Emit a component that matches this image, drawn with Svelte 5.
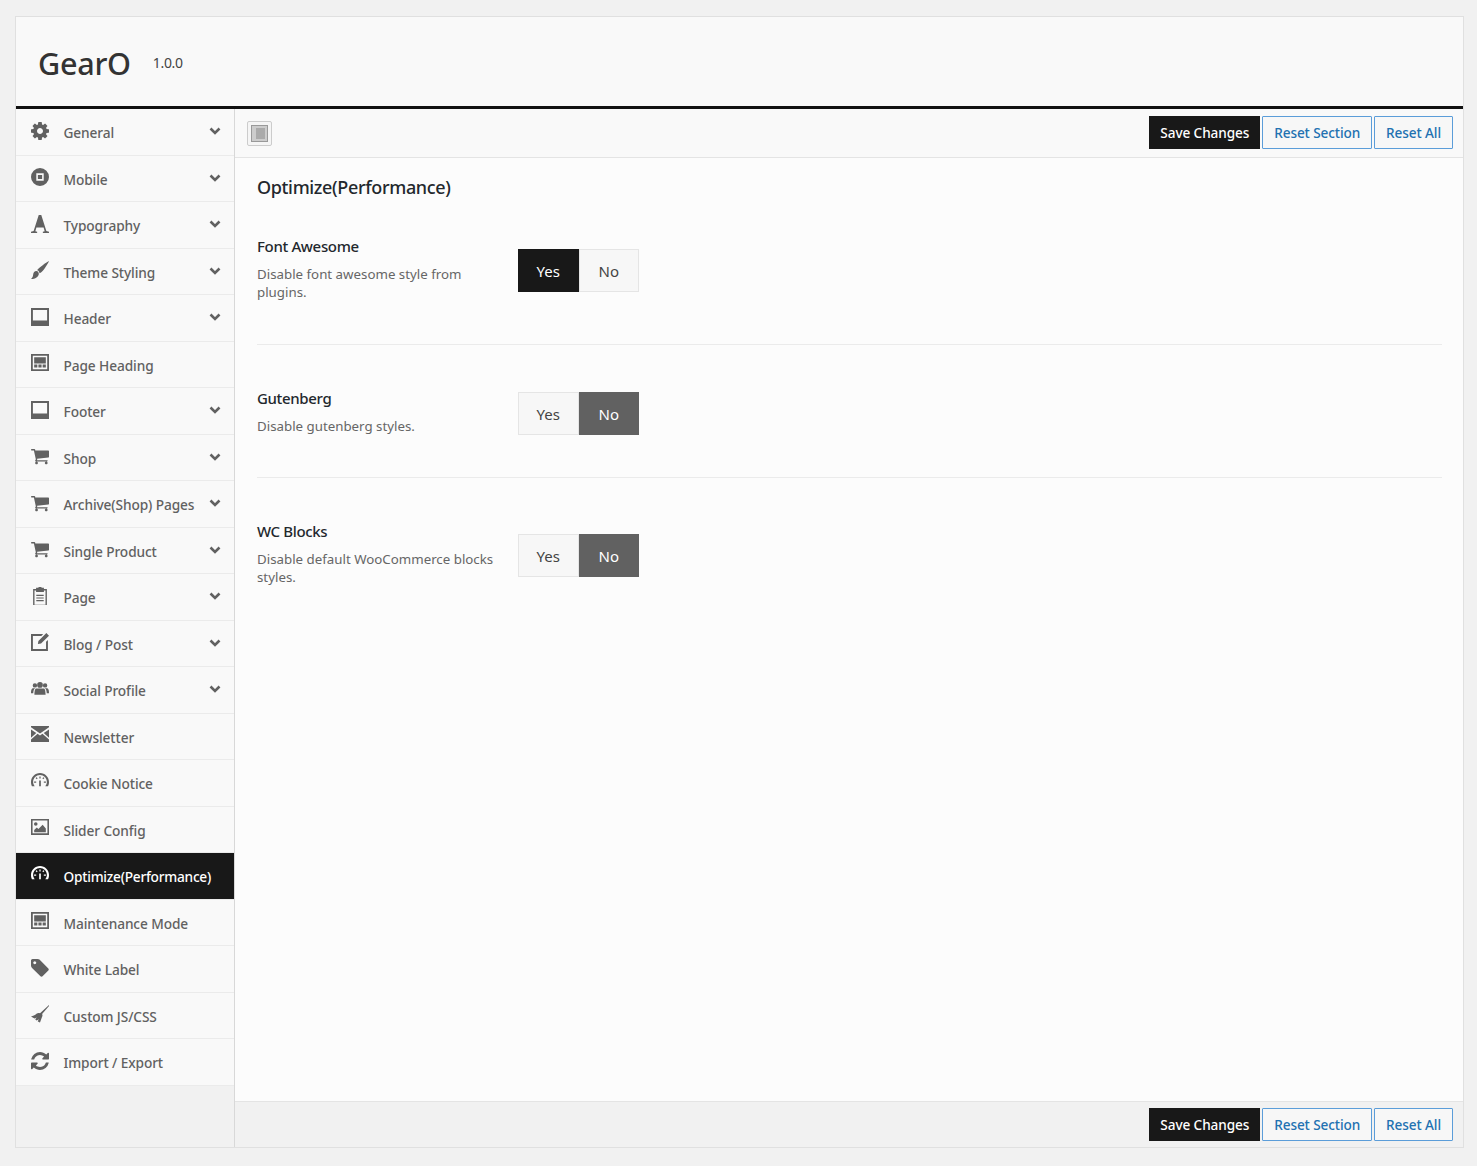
<script>
  const fa = '128 128 1536 1536';
  const box = '0 0 17 17';
  const header = 'M0 0h17v17H0zM1.800 1.800v10.100h13.400V1.800z';
  const layout = 'M0 0h17v16H0zM1.700 1.700v12.600h13.600V1.700zM3 3h11v6H3zM3 10h3v2.700H3zM7 10h3v2.700H7zM11 10h3v2.700h-3z';
  const cart = 'M704 1536q0 52-38 90t-90 38-90-38-38-90 38-90 90-38 90 38 38 90zm896 0q0 52-38 90t-90 38-90-38-38-90 38-90 90-38 90 38 38 90zm128-1088v512q0 24-16.500 42.500t-40.500 21.500l-1044 122q13 60 13 70 0 16-24 64h920q26 0 45 19t19 45-19 45-45 19h-1024q-26 0-45-19t-19-45q0-11 8-31.500t16-36 21.500-40 15.500-29.500l-177-823h-204q-26 0-45-19t-19-45 19-45 45-19h256q16 0 28.500 6.500t19.500 15.500 13 24.500 8 26 5.500 29.500 4.500 26h1201q26 0 45 19t19 45z';
  const gauge = 'M8.500 0C13.200 0 17 3.800 17 8.500c0 1.700-.3 2.700-.9 4h-2.600c.8-1.200 1.500-2.400 1.500-4C15 4.900 12.100 2 8.500 2S2 4.900 2 8.500c0 1.600.7 2.800 1.500 4H.9C.3 11.200 0 10.200 0 8.500 0 3.800 3.800 0 8.500 0zM7.700 7h1.600v5.500H7.700zM7.900 3.200h1.200v2H7.900zM4.300 4.800l.9-.9 1.100 1.100-.9.900zM12.700 4.800l-1.100 1.100-.9-.9 1.100-1.100zM2.900 8h2v1.200h-2zM12.100 8h2v1.200h-2z';

  const icons = {
    gear: { box: fa, d: 'M1152 896q0-106-75-181t-181-75-181 75-75 181 75 181 181 75 181-75 75-181zm512-109v222q0 12-8 23t-20 13l-185 28q-19 54-39 91 35 50 107 138 10 12 10 25t-9 23q-27 37-99 108t-94 71q-12 0-26-9l-138-108q-44 23-91 38-16 136-29 186-7 28-36 28h-222q-14 0-24.500-8.500t-11.500-21.500l-28-184q-49-16-90-37l-141 107q-10 9-25 9-14 0-25-11-126-114-165-168-7-10-7-23 0-12 8-23 15-21 51-66.500t54-70.500q-27-50-41-99l-183-27q-13-2-21-12.500t-8-23.500v-222q0-12 8-23t19-13l186-28q14-46 39-92-40-57-107-138-10-12-10-24 0-10 9-23 26-36 98.500-107.500t94.500-71.500q13 0 26 10l138 107q44-23 91-38 16-136 29-186 7-28 36-28h222q14 0 24.500 8.500t11.500 21.500l28 184q49 16 90 37l142-107q9-9 24-9 13 0 25 10 129 119 165 170 7 8 7 22 0 12-8 23-15 21-51 66.500t-54 70.500q26 50 41 98l183 28q13 2 21 12.500t8 23.500z' },
    mobile: { box, d: 'M8.500 0a8.500 8.500 0 1 1 0 17 8.500 8.500 0 0 1 0-17zM5 5v7h7V5zM6.500 6.500h4v4h-4z' },
    font: { box, d: 'M7.300 0h2.400l4.800 15.200 2.500.6V17h-5.800v-1.200l1.700-.5-1-3.500H5.100l-1 3.500 1.700.5V17H0v-1.200l2.500-.6z' },
    brush: { box, d: 'M17 0c-1 2.500-4.500 8-7 10.500-.6.600-1.300 1-2 1.100C7.800 9.800 7.200 9 5.700 8.700 8 6 14 1.500 17 0zM5 9.500c1.500.2 2.300 1.100 2.400 2.500C7.400 14.800 4 17 0 17c1.500-1 1.800-2.500 2-4 .2-2 1.300-3.400 3-3.500z' },
    header: { box, d: header },
    layout: { box, d: layout },
    cart: { box: '64 128 1664 1536', d: cart },
    clip: { box, d: 'M2 2h2.800V.8h2.300V0h2.800v.8h2.300V2H15v16H2zM3.300 3.300v13.400h10.400V3.300h-1.500v1.500H4.800V3.300zM5 7.300h7v1.100H5zM5 9.800h7v1.100H5zM5 12.300h7v1.100H5z' },
    edit: { box, d: 'M0 1h11.500L9.800 2.800h-8v12.400h12.400V8.300L16 6.500V17H0zM14.500 0 17 2.500 9.500 10l-3 .5.500-3z' },
    people: { box, d: 'M8.500 2a2.700 2.700 0 1 1 0 5.400 2.700 2.700 0 0 1 0-5.400zM3.700 3a2.100 2.100 0 1 1 0 4.200 2.100 2.100 0 0 1 0-4.200zM13.300 3a2.100 2.100 0 1 1 0 4.200 2.100 2.100 0 0 1 0-4.200zM5 8h7c1 0 1.600 1.200 1.800 6H3.200C3.400 9.200 4 8 5 8zM1.500 7.800H4c-1.300 1-1.700 2-1.900 4.700H0c0-2.500.3-4.200 1.500-4.700zM13 7.800h2.500c1.200.5 1.500 2.200 1.500 4.700h-2.100c-.2-2.700-.6-3.700-1.900-4.700z' },
    mail: { box, d: 'M0 0h17v1.200L8.500 7 0 1.200zM0 3.200l5 3.300L0 11zM17 3.200v7.800l-5-4.500zM6.200 7.400 8.500 9l2.300-1.600 6.200 5.300V15H0v-2.300z' },
    gauge: { box, d: gauge },
    image: { box, d: 'M0 0h17v15H0zM1.500 1.500v12h14v-12zM4.500 3a1.700 1.700 0 1 1 0 3.400 1.700 1.700 0 0 1 0-3.400zM3 12.500v-2l2.500-2.500 1.500 1.500L11 5.500l3 3.500v3.500z' },
    tag: { box: fa, d: 'M576 448q0-53-37.500-90.500t-90.500-37.500-90.500 37.500-37.500 90.500 37.500 90.500 90.500 37.500 90.500-37.500 37.500-90.500zm1067 576q0 53-37 90l-491 492q-39 37-91 37-53 0-90-37l-715-716q-38-37-64.500-101t-26.500-117v-416q0-52 38-90t90-38h416q53 0 117 26.500t102 64.500l715 714q37 39 37 91z' },
    broom: { box, d: 'M17 0v1l-6.500 7.500c.5 1 .5 2-.2 3L8.500 16.500c-.8-.2-1.500-.6-2.200-1.100l1.200-2-2.200 1.200c-.5-.4-.9-.8-1.300-1.200l1.500-1.500-2.200.8L0 10.800c2-.3 3.500-1.200 5.500-2.800 1-.7 2.200-.7 3-.1z' },
    refresh: { box: fa, d: 'M1639 1056q0 5-1 7-64 268-268 434.500t-478 166.500q-146 0-282.500-55t-243.500-157l-129 129q-19 19-45 19t-45-19-19-45v-448q0-26 19-45t45-19h448q26 0 45 19t19 45-19 45l-137 137q71 66 161 102t187 36q134 0 250-65t186-179q11-17 53-117 8-23 30-23h192q13 0 22.500 9.500t9.500 22.500zm25-800v448q0 26-19 45t-45 19h-448q-26 0-45-19t-19-45 19-45l138-138q-148-137-349-137-134 0-250 65t-186 179q-11 17-53 117-8 23-30 23h-199q-13 0-22.500-9.500t-9.500-22.500v-7q65-268 270-434.500t480-166.500q146 0 284 55.500t245 156.500l130-129q19-19 45-19t45 19 19 45z' },
  };

  const menu = [
    { label: 'General', icon: 'gear', sub: true },
    { label: 'Mobile', icon: 'mobile', sub: true },
    { label: 'Typography', icon: 'font', sub: true },
    { label: 'Theme Styling', icon: 'brush', sub: true },
    { label: 'Header', icon: 'header', sub: true },
    { label: 'Page Heading', icon: 'layout' },
    { label: 'Footer', icon: 'header', sub: true },
    { label: 'Shop', icon: 'cart', sub: true },
    { label: 'Archive(Shop) Pages', icon: 'cart', sub: true },
    { label: 'Single Product', icon: 'cart', sub: true },
    { label: 'Page', icon: 'clip', sub: true },
    { label: 'Blog / Post', icon: 'edit', sub: true },
    { label: 'Social Profile', icon: 'people', sub: true },
    { label: 'Newsletter', icon: 'mail' },
    { label: 'Cookie Notice', icon: 'gauge' },
    { label: 'Slider Config', icon: 'image' },
    { label: 'Optimize(Performance)', icon: 'gauge', active: true },
    { label: 'Maintenance Mode', icon: 'layout' },
    { label: 'White Label', icon: 'tag' },
    { label: 'Custom JS/CSS', icon: 'broom' },
    { label: 'Import / Export', icon: 'refresh' },
  ];

  const fields = [
    { title: 'Font Awesome', desc: 'Disable font awesome style from plugins.', on: true },
    { title: 'Gutenberg', desc: 'Disable gutenberg styles.', on: false },
    { title: 'WC Blocks', desc: 'Disable default WooCommerce blocks styles.', on: false },
  ];
</script>

{#snippet actions()}
  <div class="actions">
    <button class="save">Save Changes</button>
    <button class="reset">Reset Section</button>
    <button class="reset">Reset All</button>
  </div>
{/snippet}

<div class="panel">
  <header class="top">
    <h1>GearO</h1>
    <span class="version">1.0.0</span>
  </header>

  <div class="body">
    <nav class="side">
      {#each menu as item}
        <a class="item" class:active={item.active} href="#top">
          <svg class="icon" viewBox={icons[item.icon].box} aria-hidden="true"><path d={icons[item.icon].d} fill-rule="evenodd" /></svg>
          <span class="label">{item.label}</span>
          {#if item.sub}
            <svg class="chev" viewBox="0 0 12 8" aria-hidden="true"><path d="M1.500 1.500 6 6l4.500-4.500" /></svg>
          {/if}
        </a>
      {/each}
    </nav>

    <main class="main">
      <div class="toolbar">
        <button class="expand" aria-label="Expand">
          <span class="expand-box"></span>
        </button>
        {@render actions()}
      </div>

      <div class="content">
        <h2>Optimize(Performance)</h2>
        {#each fields as field}
          <section class="field">
            <div class="info">
              <h3>{field.title}</h3>
              <p>{field.desc}</p>
            </div>
            <div class="switch">
              <span class="opt" class:yes={field.on}>Yes</span>
              <span class="opt" class:no={!field.on}>No</span>
            </div>
          </section>
        {/each}
      </div>

      <div class="foot">
        {@render actions()}
      </div>
    </main>
  </div>
</div>

<style>
  :global(body) {
    background: #f1f1f1;
    font-family: "Noto Sans", "Open Sans", sans-serif;
    color: #23282d;
  }

  .panel {
    box-sizing: border-box;
    margin: 16px 12px 0 15px;
    width: 1449px;
    height: 1132px;
    border: 1px solid #e0e0e0;
    background: #f9f9f9;
    display: flex;
    flex-direction: column;
  }

  .top {
    box-sizing: border-box;
    height: 92px;
    border-bottom: 3px solid #111;
    padding: 3px 0 0 22px;
    display: flex;
    align-items: center;
    gap: 22px;
  }

  h1 {
    margin: 0;
    font-size: 30.600px;
    font-weight: 500;
    color: #333;
    letter-spacing: -0.3px;
  }

  .version {
    font-size: 14px;
    color: #444;
    letter-spacing: -0.3px;
    margin-bottom: 2px;
  }

  .body {
    flex: 1;
    display: flex;
    min-height: 0;
  }

  .side {
    box-sizing: border-box;
    width: 219px;
    flex: none;
    background: #f1f1f1;
    border-right: 1px solid #d8d8d8;
  }

  .item {
    box-sizing: border-box;
    height: 46.500px;
    display: flex;
    align-items: center;
    padding: 0 13px 0 15px;
    background: #f9f9f9;
    border-bottom: 1px solid #ebebeb;
    color: #616161;
    text-decoration: none;
    font-size: 13.700px;
    font-weight: 500;
  }

  .item.active {
    background: #181818;
    color: #fff;
  }

  .item.active .label {
    letter-spacing: -0.25px;
  }

  .icon {
    width: 18px;
    height: 18px;
    flex: none;
    fill: currentColor;
    margin-top: -2px;
  }

  .label {
    margin: 2px 0 0 14.500px;
    flex: 1;
    white-space: nowrap;
    letter-spacing: -0.1px;
  }

  .chev {
    width: 12px;
    height: 8px;
    flex: none;
    fill: none;
    stroke: #616161;
    stroke-width: 2.600;
    margin-top: -1px;
  }

  .main {
    flex: 1;
    min-width: 0;
    display: flex;
    flex-direction: column;
    background: #fcfcfc;
  }

  .toolbar {
    box-sizing: border-box;
    height: 49px;
    flex: none;
    display: flex;
    align-items: center;
    justify-content: space-between;
    padding: 0 10px 0 12px;
    background: #f9f9f9;
    border-bottom: 1px solid #e4e4e4;
  }

  .toolbar .actions {
    margin-bottom: 2px;
  }

  .expand {
    box-sizing: border-box;
    width: 25px;
    height: 25px;
    padding: 0;
    border: 1px solid #ccc;
    border-radius: 2px;
    background: #f5f5f5;
    display: flex;
    align-items: center;
    justify-content: center;
  }

  .expand-box {
    box-sizing: border-box;
    width: 17px;
    height: 17px;
    border: 1px solid #999;
    background: linear-gradient(90deg, #ccc 0 4px, #aaa 4px);
    box-shadow: inset 0 0 0 2px #ccc;
  }

  .actions {
    display: flex;
    gap: 2px;
  }

  .actions button {
    box-sizing: border-box;
    height: 33px;
    font-family: inherit;
    font-size: 13.600px;
    font-weight: 500;
    padding: 0 11px;
    letter-spacing: -0.1px;
    white-space: nowrap;
  }

  .actions .save {
    background: #181818;
    border: 1px solid #181818;
    color: #fff;
    padding: 0 10px;
  }

  .reset {
    background: #f7f7f7;
    border: 1px solid #5b9dd9;
    border-radius: 1px;
    color: #2271b1;
  }

  .content {
    flex: 1;
    padding: 0 21px 0 22px;
    min-height: 0;
  }

  h2 {
    margin: 0;
    padding-top: 17px;
    height: 36px;
    box-sizing: border-box;
    font-size: 18px;
    font-weight: 500;
    color: #23282d;
    line-height: 25px;
    letter-spacing: -0.35px;
  }

  .field {
    display: flex;
    align-items: center;
    padding: 44px 0 42px;
    border-bottom: 1px solid #ebebeb;
  }

  h2 + .field {
    padding: 43px 0;
  }

  .field:last-child {
    border-bottom: none;
  }

  .info {
    width: 261px;
    flex: none;
    padding-right: 20px;
    box-sizing: border-box;
  }

  h3 {
    margin: 0;
    font-size: 15px;
    font-weight: 500;
    line-height: 18px;
    letter-spacing: -0.35px;
    color: #23282d;
  }

  p {
    margin: 10px 0 0;
    font-size: 13.300px;
    line-height: 18px;
    color: #666;
  }

  .switch {
    display: flex;
    margin-top: 3px;
  }

  .opt {
    box-sizing: border-box;
    width: 60.500px;
    height: 43px;
    display: flex;
    align-items: center;
    justify-content: center;
    font-size: 15px;
    color: #444;
    background: #f7f7f7;
    border: 1px solid #e5e5e5;
  }

  .opt.yes {
    background: #181818;
    border-color: #181818;
    color: #fff;
  }

  .opt.no {
    background: #616161;
    border-color: #616161;
    color: #fff;
  }

  .foot {
    box-sizing: border-box;
    height: 46px;
    flex: none;
    display: flex;
    align-items: center;
    justify-content: flex-end;
    padding: 0 10px;
    background: #f1f1f1;
    border-top: 1px solid #e4e4e4;
  }
</style>
